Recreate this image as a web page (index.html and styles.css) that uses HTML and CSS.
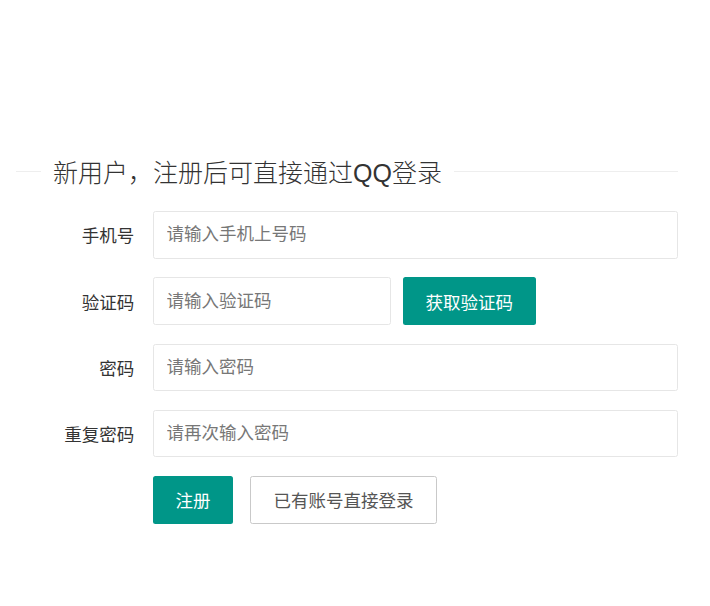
FILE: index.html
```html
<!DOCTYPE html>
<html>
<head>
    <meta charset="utf-8">
    <link rel="stylesheet" href="styles.css">
</head>
<body>
    <div class="container">
        <div class="field-title">
            <span class="title-line short"></span>
            <span class="title-text">新用户，注册后可直接通过QQ登录</span>
            <span class="title-line"></span>
        </div>

        <form class="form">
            <div class="form-item">
                <label class="form-label">手机号</label>
                <div class="input-block">
                    <input class="input" type="text" placeholder="请输入手机上号码">
                </div>
            </div>

            <div class="form-item">
                <label class="form-label">验证码</label>
                <div class="input-block">
                    <input class="input input-inline" type="text" placeholder="请输入验证码">
                    <button type="button" class="btn">获取验证码</button>
                </div>
            </div>

            <div class="form-item">
                <label class="form-label">密码</label>
                <div class="input-block">
                    <input class="input" type="password" placeholder="请输入密码">
                </div>
            </div>

            <div class="form-item">
                <label class="form-label">重复密码</label>
                <div class="input-block">
                    <input class="input" type="password" placeholder="请再次输入密码">
                </div>
            </div>

            <div class="form-item">
                <div class="input-block offset">
                    <button type="button" class="btn">注册</button>
                    <button type="button" class="btn btn-primary">已有账号直接登录</button>
                </div>
            </div>
        </form>
    </div>
</body>
</html>
```

FILE: styles.css
```css
body {
    margin: 0;
    background-color: #ffffff;
    color: #333333;
    font-family: "Liberation Sans", "Noto Sans CJK SC", sans-serif;
    font-size: 17.5px;
}

.container {
    padding: 156px 32px 0 15.5px;
}

.field-title {
    display: flex;
    align-items: center;
    height: 30px;
    margin-bottom: 25px;
}

.title-line {
    flex: 1;
    height: 1px;
    background-color: #eeeeee;
}

.title-line.short {
    flex: none;
    width: 25px;
}

.title-text {
    padding: 0 12.5px;
    font-size: 25px;
    font-weight: 300;
    color: #333333;
}

.form-item {
    display: flex;
    align-items: center;
    margin-bottom: 18.75px;
}

.form-label {
    width: 100px;
    padding: 0 18.75px;
    text-align: right;
    color: #333333;
}

.input-block {
    flex: 1;
    display: flex;
    align-items: center;
}

.input-block.offset {
    margin-left: 137.5px;
}

.input {
    flex: 1;
    box-sizing: border-box;
    height: 47.5px;
    padding: 0 0 0 12.5px;
    border: 1px solid #e6e6e6;
    border-radius: 2.5px;
    font-family: inherit;
    font-size: 17.5px;
    color: #333333;
    outline: none;
}

.input::placeholder {
    color: #777777;
}

.input-inline {
    flex: none;
    width: 237.5px;
    margin-right: 12.5px;
}

.btn {
    box-sizing: border-box;
    height: 47.5px;
    padding: 0 21.5px;
    border: 1px solid transparent;
    border-radius: 2.5px;
    background-color: #009688;
    color: #ffffff;
    font-family: inherit;
    font-size: 17.5px;
    cursor: pointer;
}

.btn-primary {
    margin-left: 17px;
    padding: 0 22.5px;
    border-color: #c9c9c9;
    background-color: #ffffff;
    color: #555555;
}
```
